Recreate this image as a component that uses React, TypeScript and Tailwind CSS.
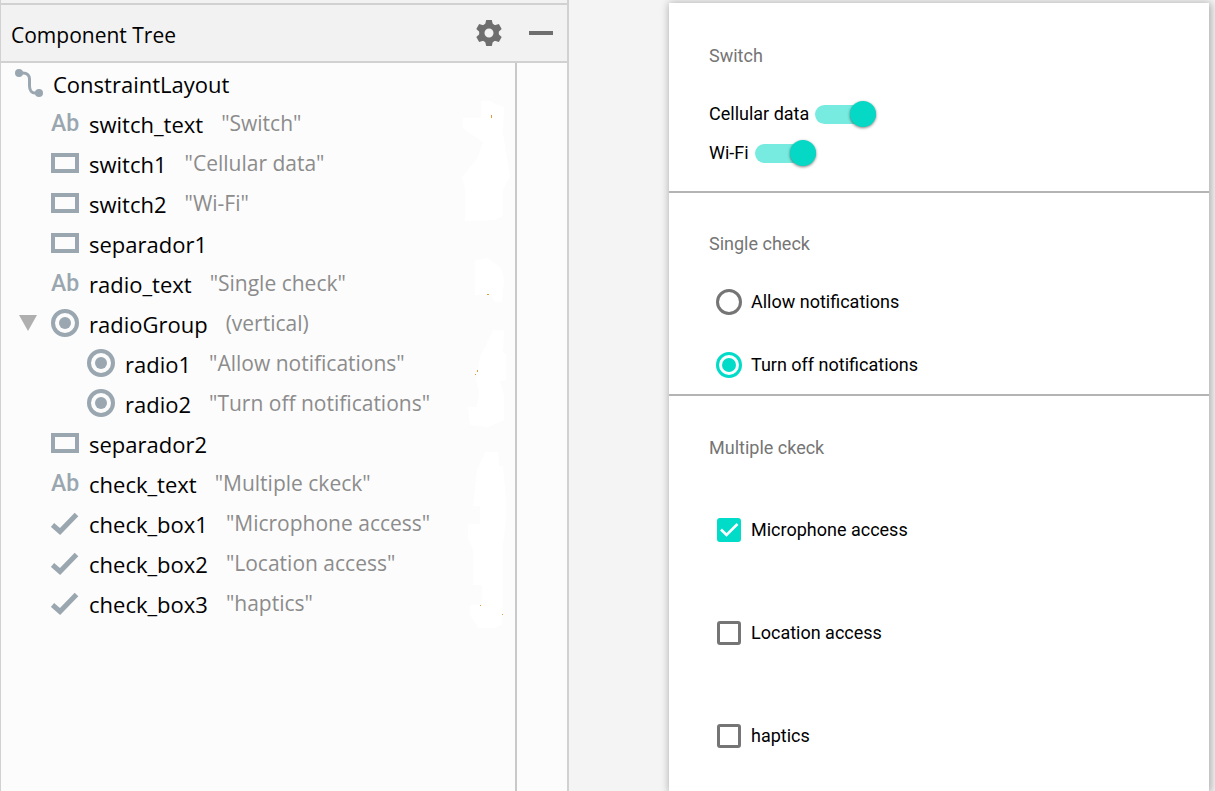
import React, { useState } from 'react';

type Kind = 'layout' | 'text' | 'view' | 'radio' | 'check';

interface TreeNode {
  name: string;
  kind: Kind;
  value?: string;
  children?: TreeNode[];
}

const nodes: TreeNode[] = [
  { name: 'switch_text', kind: 'text', value: '"Switch"' },
  { name: 'switch1', kind: 'view', value: '"Cellular data"' },
  { name: 'switch2', kind: 'view', value: '"Wi-Fi"' },
  { name: 'separador1', kind: 'view' },
  { name: 'radio_text', kind: 'text', value: '"Single check"' },
  {
    name: 'radioGroup',
    kind: 'radio',
    value: '(vertical)',
    children: [
      { name: 'radio1', kind: 'radio', value: '"Allow notifications"' },
      { name: 'radio2', kind: 'radio', value: '"Turn off notifications"' },
    ],
  },
  { name: 'separador2', kind: 'view' },
  { name: 'check_text', kind: 'text', value: '"Multiple ckeck"' },
  { name: 'check_box1', kind: 'check', value: '"Microphone access"' },
  { name: 'check_box2', kind: 'check', value: '"Location access"' },
  { name: 'check_box3', kind: 'check', value: '"haptics"' },
];

function KindIcon({ kind }: { kind: Kind }) {
  if (kind === 'text') {
    return (
      <span className="w-7 shrink-0 pt-0.5 font-['Roboto',sans-serif] text-[23px] leading-7 font-medium text-[#9aa7b0]">
        Ab
      </span>
    );
  }
  return (
    <svg viewBox="0 0 28 28" className="size-7 shrink-0" fill="none" stroke="#9aa7b0" aria-hidden="true">
      {kind === 'layout' && (
        <>
          <path d="M4 4H8C12 4 14.5 6.500 14.500 10V17C14.500 21.500 17 24 20 24H24" strokeWidth="3" />
          <circle cx="4" cy="4" r="4" fill="#9aa7b0" stroke="none" />
          <circle cx="24" cy="24" r="4" fill="#9aa7b0" stroke="none" />
        </>
      )}
      {kind === 'view' && <rect x="2" y="6" width="24" height="16" strokeWidth="4" />}
      {kind === 'radio' && (
        <>
          <circle cx="14" cy="14" r="12" strokeWidth="4" />
          <circle cx="14" cy="14" r="6" fill="#9aa7b0" stroke="none" />
        </>
      )}
      {kind === 'check' && <path d="M1.500 16L9 22.500L25.500 5.500" strokeWidth="5" />}
    </svg>
  );
}

function TreeItem({ node }: { node: TreeNode }) {
  const [open, setOpen] = useState(true);
  return (
    <li role="treeitem" aria-expanded={node.children ? open : undefined}>
      <div className="flex h-10 items-center whitespace-nowrap">
        {node.children && (
          <button
            type="button"
            aria-label={`Toggle ${node.name}`}
            onClick={() => setOpen(!open)}
            className="-ml-9 flex w-9 pl-1"
          >
            <svg viewBox="0 0 18 16" className="h-4 w-[18px]" fill="#afafaf" aria-hidden="true">
              <path d={open ? 'M0 0H18L9 16Z' : 'M2 0V16L16 8Z'} />
            </svg>
          </button>
        )}
        <KindIcon kind={node.kind} />
        <span className="pt-0.5 pl-2.5 text-[22px] leading-8 text-black">{node.name}</span>
        {node.value && <span className="pl-[18px] text-[21px] leading-8 text-[#8c8c8c]">{node.value}</span>}
      </div>
      {node.children && open && (
        <ul role="group" className="pl-9">
          {node.children.map((c) => (
            <TreeItem key={c.name} node={c} />
          ))}
        </ul>
      )}
    </li>
  );
}

function GearIcon() {
  return (
    <svg viewBox="-13 -13 26 26" className="size-[26px]" aria-hidden="true">
      <circle r="7.200" fill="none" stroke="#6e6e6e" strokeWidth="5.400" />
      {[0, 60, 120, 180, 240, 300].map((a) => (
        <path key={a} d="M-4 -8L-2.800 -13H2.800L4 -8Z" fill="#6e6e6e" transform={`rotate(${a})`} />
      ))}
    </svg>
  );
}

/* Faint white areas along the right edge of the tree, with a few stray specks. */
function EdgeMarks() {
  return (
    <svg
      viewBox="460 100 55 540"
      className="pointer-events-none absolute top-[37px] right-0 h-[540px] w-[55px]"
      fill="#fff"
      aria-hidden="true"
    >
      <path d="M481 101H491L495 104L504 107L503 133L507 158L510 177L503 190V216L495 220L465 221V188L462 177L478 157L483 142L469 133L463 128V118H481Z" />
      <path d="M475 260L488 258L493 262L501 268L504 280L502 302H494L492 295H475Z" />
      <path d="M493 330H504L503 352L506 354V380L500 381L504 395V420L488 427L470 425L468 407H477L479 392L476 380L480 357Z" />
      <path d="M485 452H498L499 466H503L506 500V520L503 545V590L502 625L494 628H478L470 615V605H482V585H473V550L468 538V524H480V506H473L477 470Z" />
      <path d="M491 115h1v3h-1zM487 294h2v1h-2zM477 370h1v2h-1zM475 374h1v1h-1zM480 605h1v1h-1zM502 614h1v1h-1z" fill="#dca032" />
    </svg>
  );
}

function ComponentTree() {
  return (
    <aside className="flex w-[569px] shrink-0 flex-col border-r-2 border-l border-r-[#d1d1d1] border-l-[#d1d1d1] bg-[#fcfcfc] font-['Open_Sans','Noto_Sans',sans-serif]">
      <div className="h-[3px] bg-[#f2f2f2]" />
      <header className="flex h-[60px] items-center border-y-2 border-[#d1d1d1] bg-[#f2f2f2] pr-3.5 pl-2.5">
        <h1 className="flex-1 pt-1 text-[21px] leading-8 text-black">Component Tree</h1>
        <button type="button" aria-label="Settings" className="mr-[27px]">
          <GearIcon />
        </button>
        <button type="button" aria-label="Hide panel" className="flex h-6 w-6 items-center">
          <span className="h-1 w-6 bg-[#6e6e6e]" />
        </button>
      </header>
      <div className="flex flex-1">
        <div className="relative flex-1 border-r-2 border-[#c9c9c9] pl-3.5">
          <EdgeMarks />
          <ul role="tree" aria-label="Component Tree" className="relative">
            <li role="treeitem" aria-expanded="true">
              <div className="flex h-10 items-center">
                <KindIcon kind="layout" />
                <span className="pt-0.5 pl-2.5 text-[22px] leading-8 text-black">ConstraintLayout</span>
              </div>
              <ul role="group" className="pl-9">
                {nodes.map((n) => (
                  <TreeItem key={n.name} node={n} />
                ))}
              </ul>
            </li>
          </ul>
        </div>
        <div className="w-[50px]" />
      </div>
    </aside>
  );
}

function Title({ children }: { children: React.ReactNode }) {
  return <h2 className="text-[18px] leading-6 text-[#757575]">{children}</h2>;
}

function Switch({ id, label }: { id: string; label: string }) {
  return (
    <div className="flex h-[26px] items-center gap-1.5">
      <label htmlFor={id}>{label}</label>
      <input
        id={id}
        type="checkbox"
        role="switch"
        defaultChecked
        className="relative flex h-[19px] w-[61px] appearance-none items-center justify-start rounded-full bg-[#b9b9b9] before:size-[26px] before:shrink-0 before:rounded-full before:bg-[#f1f1f1] before:shadow-[0_1px_3px_rgba(0,0,0,0.5)] checked:justify-end checked:bg-[#77ebe0] checked:before:bg-[#05d8c4]"
      />
    </div>
  );
}

function Radio({ id, label, checked }: { id: string; label: string; checked?: boolean }) {
  return (
    <div className="flex h-[26px] items-center gap-[9px] pl-[7px]">
      <input
        id={id}
        type="radio"
        name="notifications"
        defaultChecked={checked}
        className="grid size-[26px] appearance-none place-items-center rounded-full border-[3px] border-[#757575] before:size-[14px] before:rounded-full checked:border-[#00dcc8] checked:before:bg-[#00dcc8]"
      />
      <label htmlFor={id}>{label}</label>
    </div>
  );
}

function Check({ id, label, checked }: { id: string; label: string; checked?: boolean }) {
  return (
    <div className="flex h-[26px] items-center gap-[9px] pl-[7px]">
      <span className="grid size-[26px] place-items-center">
        <input
          id={id}
          type="checkbox"
          defaultChecked={checked}
          className="peer col-start-1 row-start-1 size-6 appearance-none rounded-[3px] border-[3px] border-[#757575] checked:border-[#00dcc8] checked:bg-[#00dcc8]"
        />
        <svg
          viewBox="0 0 24 24"
          className="pointer-events-none invisible col-start-1 row-start-1 size-6 peer-checked:visible"
          fill="none"
          stroke="#fff"
          strokeWidth="2.600"
          aria-hidden="true"
        >
          <path d="M4 11.500L9.500 17L20.500 6" />
        </svg>
      </span>
      <label htmlFor={id}>{label}</label>
    </div>
  );
}

export default function App() {
  return (
    <div className="flex min-h-screen bg-[#f4f4f4]">
      <ComponentTree />
      <main className="flex flex-1 overflow-hidden pt-[3px] pr-1.5 pl-[100px] font-['Roboto',sans-serif] text-[18px] leading-6 text-black">
        <div className="flex-1 bg-white shadow-[1px_1px_8px_1px_rgba(0,0,0,0.3)]">
          <section className="border-b-2 border-[#b4b4b4] px-10 pt-[41px] pb-[25px]">
            <Title>Switch</Title>
            <div className="flex flex-col gap-[13px] pt-[33px]">
              <Switch id="cellular" label="Cellular data" />
              <Switch id="wifi" label="Wi-Fi" />
            </div>
          </section>
          <section className="border-b-2 border-[#b4b4b4] px-10 pt-[39px] pb-4">
            <Title>Single check</Title>
            <div className="flex flex-col gap-[37px] pt-[33px]">
              <Radio id="allow" label="Allow notifications" />
              <Radio id="off" label="Turn off notifications" checked />
            </div>
          </section>
          <section className="px-10 pt-10">
            <Title>Multiple ckeck</Title>
            <div className="flex flex-col gap-[77px] pt-[57px]">
              <Check id="mic" label="Microphone access" checked />
              <Check id="location" label="Location access" />
              <Check id="haptics" label="haptics" />
            </div>
          </section>
        </div>
      </main>
    </div>
  );
}
